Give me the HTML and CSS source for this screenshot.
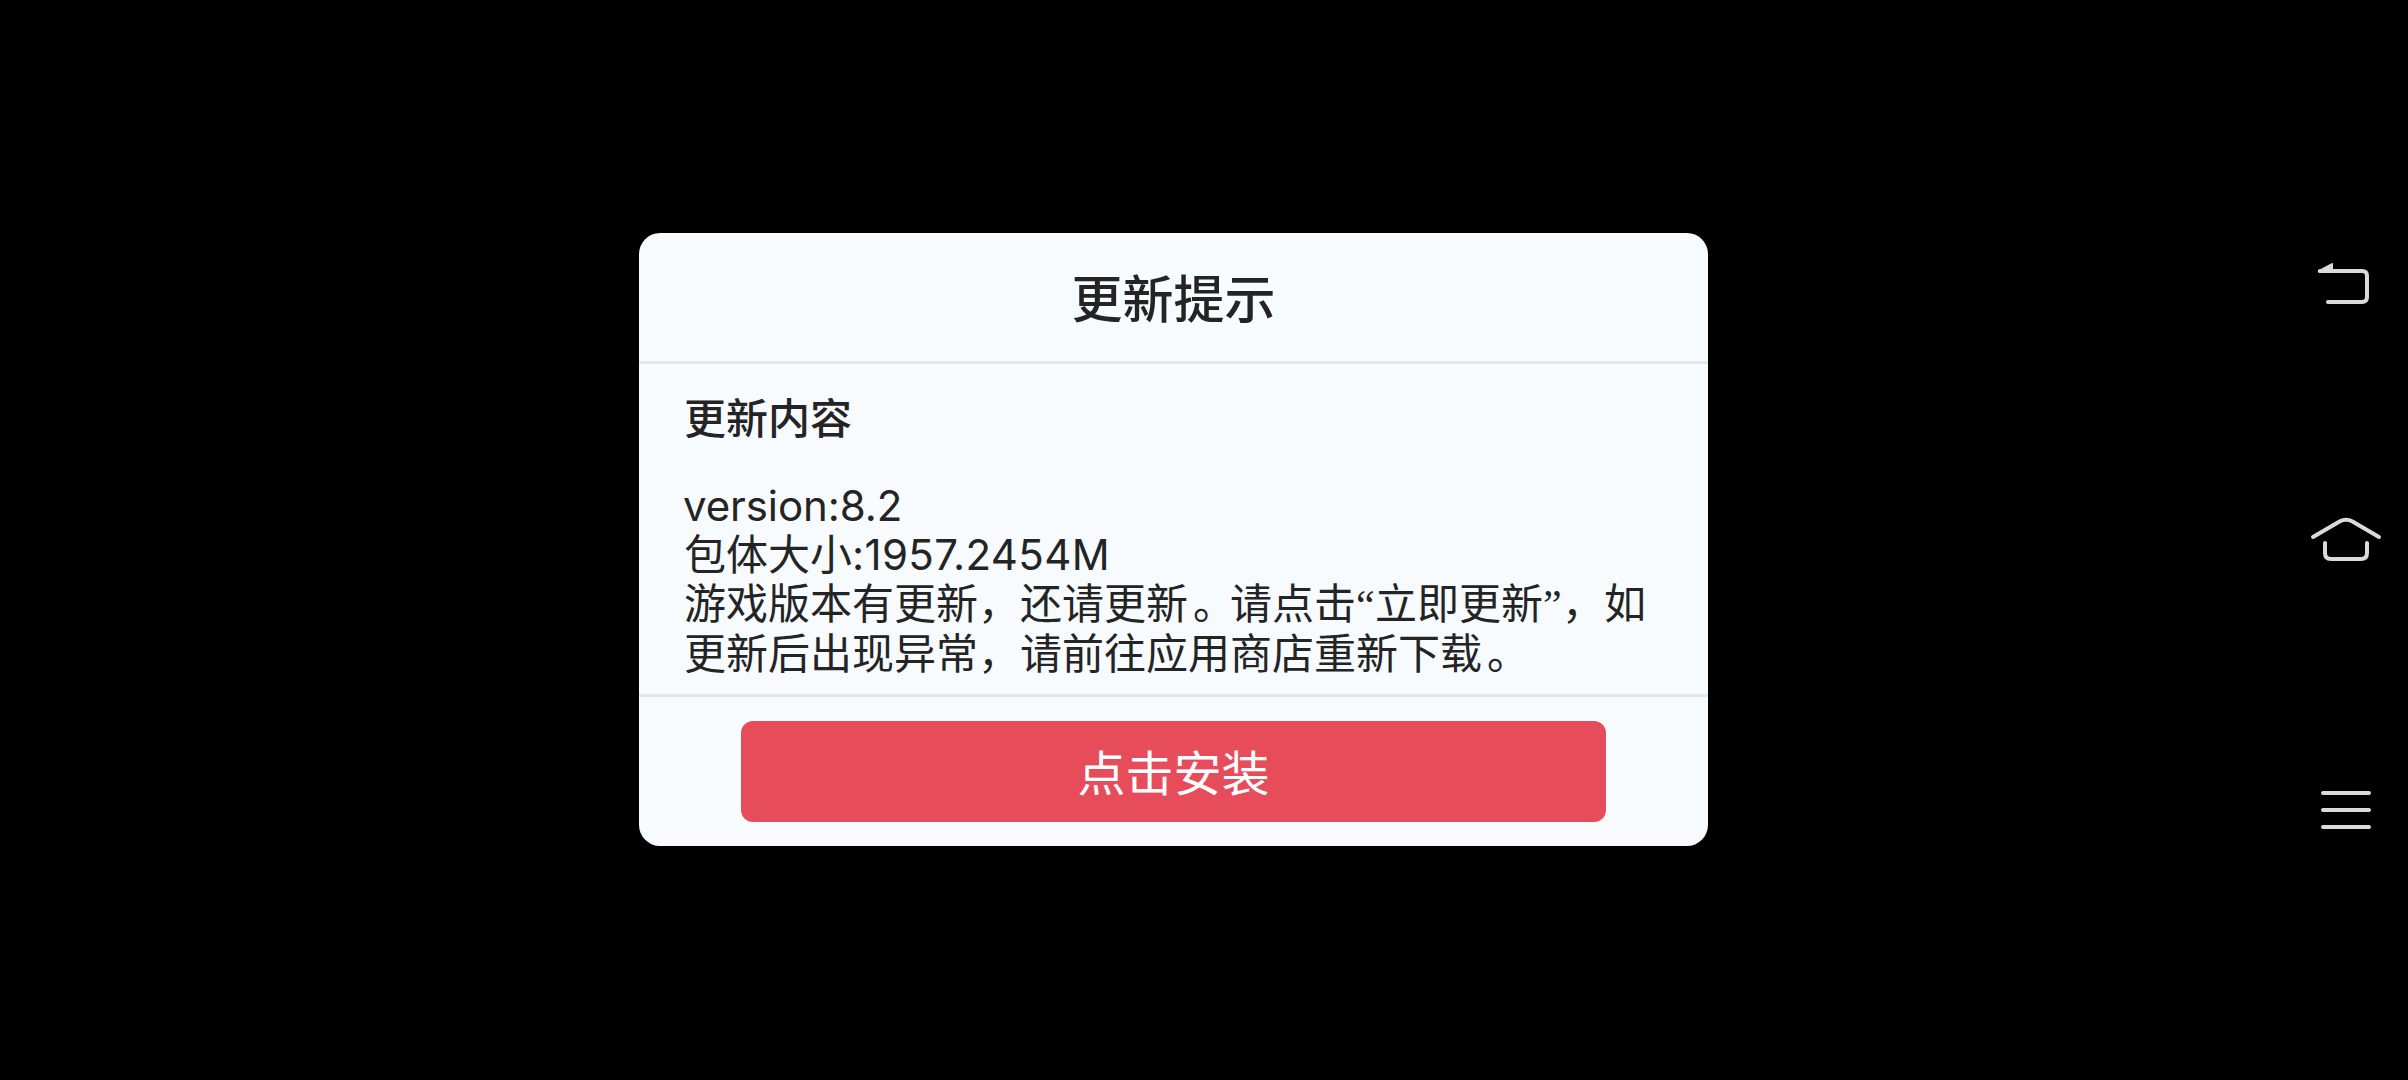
FILE: index.html
```html
<!DOCTYPE html>
<html lang="zh-CN">
<head>
<meta charset="utf-8">
<title>更新提示</title>
<link rel="stylesheet" href="styles.css">
</head>
<body>
<main class="stage">
  <section class="dialog">
    <h1 class="dialog-title">更新提示</h1>
    <div class="dialog-body">
      <h2 class="subtitle">更新内容</h2>
      <p class="notes"><span class="latin version">version:8.2</span><br>包体大小<span class="latin size">:1957.2454M</span><br>游戏版本有更新，还请更新<span class="stop">。</span>请点击<span class="quote">“</span>立即更新<span class="quote">”</span>，如<br>更新后出现异常，请前往应用商店重新下载<span class="stop">。</span></p>
    </div>
    <footer class="dialog-footer">
      <button class="install">点击安装</button>
    </footer>
  </section>
</main>
<nav class="navbar">
  <svg class="nav-icon" viewBox="0 0 100 70">
    <path class="fill" d="M18 20.5 31.5 13.2Q33 12.6 33 14V22.8H19.5Q17 22.5 18 20.5Z"/>
    <path d="M20 21H62Q67 21 67 26V47Q67 52 62 52H28"/>
  </svg>
  <svg class="nav-icon" viewBox="0 0 100 70">
    <path d="M13 32 39.5 16.5Q46 13 52.5 16.5L79 32"/>
    <path d="M25 38V48Q25 54 31 54H61Q67 54 67 48V38"/>
  </svg>
  <svg class="nav-icon" viewBox="0 0 100 70">
    <path d="M23 18H69M23 35H69M23 52H69"/>
  </svg>
</nav>
</body>
</html>
```
FILE: styles.css
```css
* {
  box-sizing: border-box;
}

body {
  margin: 0;
  height: 1080px;
  display: flex;
  background: #000;
  color: #242424;
  font-family: "Noto Sans CJK SC", sans-serif;
  overflow: hidden;
}

.stage {
  flex: 1;
  display: flex;
  justify-content: center;
  align-items: flex-start;
  padding: 233px 0 0 47px;
}

.dialog {
  width: 1069px;
  height: 613px;
  display: flex;
  flex-direction: column;
  background: #f7fbfe;
  border-radius: 21px;
  overflow: hidden;
}

.dialog-title {
  margin: 0;
  height: 131px;
  border-bottom: 3px solid #e6e6e6;
  font-size: 51px;
  font-weight: 500;
  line-height: 127px;
  text-align: center;
}

.dialog-body {
  flex: 1;
  padding: 27px 0 0 45px;
}

.subtitle {
  margin: 0 0 38px;
  font-size: 42px;
  font-weight: 500;
  line-height: 49px;
}

.notes {
  margin: 0;
  font-size: 42px;
  line-height: 49px;
  white-space: nowrap;
}

.latin {
  font-family: Inter, sans-serif;
  line-height: 1;
}

.version {
  margin-left: -1px;
  letter-spacing: -0.1px;
}

.size {
  letter-spacing: 0.35px;
}

.stop {
  padding-left: 5px;
  margin-right: -5px;
}

.quote {
  display: inline-block;
  width: 19px;
  font-family: "Liberation Serif", serif;
  line-height: 1;
}

.dialog-footer {
  height: 152px;
  padding-top: 24px;
  border-top: 3px solid #e6e6e6;
  display: flex;
  justify-content: center;
  align-items: flex-start;
}

.install {
  width: 865px;
  height: 101px;
  padding: 0 0 2px;
  border: 0;
  border-radius: 12px;
  background: #e74c5b;
  color: #fff;
  font: 400 48px/99px "Noto Sans CJK SC", sans-serif;
}

.navbar {
  width: 108px;
  padding: 250px 8px 0 0;
  display: grid;
  grid-template-rows: 255px 270px 70px;
  align-content: start;
}

.nav-icon {
  display: block;
  width: 100px;
  height: 70px;
  fill: none;
  stroke: #dadada;
  stroke-width: 4;
  stroke-linecap: round;
}

.nav-icon .fill {
  fill: #dadada;
  stroke: none;
}
```
